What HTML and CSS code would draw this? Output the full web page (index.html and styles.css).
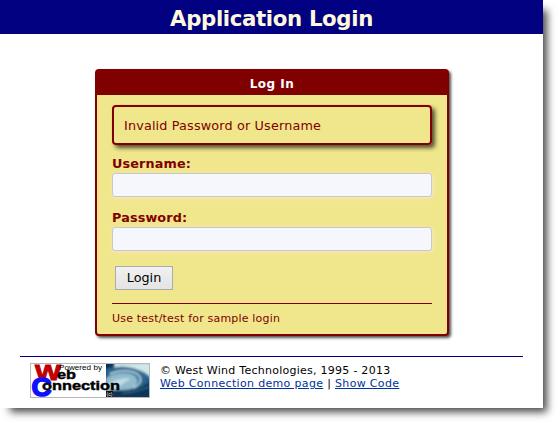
FILE: index.html
```html
<!DOCTYPE html>
<html lang="en">
<head>
<meta charset="utf-8">
<title>Application Login</title>
<link rel="stylesheet" href="styles.css">
</head>
<body>
<div class="window">
  <header class="banner"><h1>Application Login</h1></header>
  <main class="dialog">
    <h2 class="dialog-title">Log In</h2>
    <form class="dialog-body">
      <div class="error">Invalid Password or Username</div>
      <label for="user">Username:</label>
      <input class="field" id="user" type="text">
      <label for="pass">Password:</label>
      <input class="field" id="pass" type="password">
      <button class="login" type="button">Login</button>
      <div class="hint"><span>Use test/test for sample login</span></div>
    </form>
  </main>
  <footer class="footer">
    <svg class="logo" width="120" height="35" viewBox="0 0 120 35">
      <defs>
        <linearGradient id="sea" x1="0" y1="0" x2="1" y2="1">
          <stop offset="0" stop-color="#05264f"/>
          <stop offset=".5" stop-color="#397da8"/>
          <stop offset="1" stop-color="#0b3a68"/>
        </linearGradient>
        <filter id="soft"><feGaussianBlur stdDeviation=".9"/></filter>
        <clipPath id="photo"><rect x="76" y="1" width="43" height="33"/></clipPath>
      </defs>
      <rect x=".5" y=".5" width="119" height="34" fill="#fff" stroke="#b8b8b8"/>
      <g clip-path="url(#photo)">
        <rect x="76" y="1" width="43" height="33" fill="url(#sea)"/>
        <g filter="url(#soft)">
          <path d="M84 0H121V16C115 7 102 3 84 5Z" fill="#cfe6ea"/>
          <path d="M76 6C88 2 106 3 113 11C118 17 114 23 107 24C111 18 106 12 98 12C91 11 84 13 76 16Z" fill="#2b6690"/>
          <path d="M76 15C86 9 101 8 106 14C110 19 106 24 99 27L76 27Z" fill="#8fbccd"/>
          <path d="M80 11C91 6 106 7 110 14C112 19 108 23 103 25" fill="none" stroke="#c4dfe4" stroke-width="1.5"/>
          <path d="M76 22C86 16 94 14 101 16C96 18 90 23 84 27L76 29Z" fill="#c3dde3"/>
          <path d="M76 28C91 26 105 29 120 20V35H76Z" fill="#0c3459"/>
          <path d="M92 30C100 30 107 28 119 24" fill="none" stroke="#3f7ba1"/>
        </g>
        <rect x="76" y="28" width="7" height="6" fill="#111"/>
        <text class="logo-mark" x="76.5" y="33">(c)</text>
      </g>
      <text class="logo-w" x="5" y="17" textLength="26" lengthAdjust="spacingAndGlyphs">W</text>
      <text class="logo-c" x="1.5" y="32.5" textLength="20" lengthAdjust="spacingAndGlyphs">C</text>
      <text class="logo-small" x="29" y="7" textLength="43" lengthAdjust="spacingAndGlyphs">Powered by</text>
      <text class="logo-word" x="27" y="16" textLength="19" lengthAdjust="spacingAndGlyphs">eb</text>
      <text class="logo-word" x="12" y="26.5" textLength="78" lengthAdjust="spacingAndGlyphs">onnection</text>
    </svg>
    <div class="legal">
      <div class="copyright">© West Wind Technologies, 1995 - 2013</div>
      <div class="links"><a href="#">Web Connection demo page</a> | <a href="#">Show Code</a></div>
    </div>
  </footer>
</div>
</body>
</html>
```
FILE: styles.css
```css
* { box-sizing: border-box; }
body {
  min-height: 423px;
  margin: 0;
  background: #fff;
  font-family: Verdana, "DejaVu Sans", sans-serif;
}
.window {
  width: 543px;
  height: 408px;
  background: #fff;
  box-shadow: 7px 7px 8px -3px #000000b8;
}
.banner {
  height: 34px;
  background: #000080;
  color: #fff8dc;
  text-align: center;
}
.banner h1 {
  margin: 0;
  font-size: 21.3px;
  letter-spacing: -.37px;
  line-height: 37px;
}
.dialog {
  width: 354px;
  height: 267px;
  margin: 35px 0 0 95px;
  border: 2px solid #800000;
  border-radius: 4px;
  background: #f0e68c;
  color: #800000;
  box-shadow: 2px 2px 3px #000000b0;
}
.dialog-title {
  height: 24px;
  margin: 0;
  background: #800000;
  color: #fff;
  text-align: center;
  font-size: 12px;
  letter-spacing: .5px;
  line-height: 26px;
}
.dialog-body {
  display: flex;
  flex-direction: column;
  align-items: flex-start;
  padding: 10px 15px 0;
}
.error {
  width: 320px;
  height: 40px;
  margin-bottom: 9px;
  padding-left: 10px;
  border: 2px solid #800000;
  border-radius: 4px;
  box-shadow: 3px 3px 4px #000000a8;
  font-size: 12.8px;
  letter-spacing: .15px;
  line-height: 37px;
}
label {
  height: 19px;
  font-size: 12.8px;
  font-weight: bold;
  letter-spacing: .12px;
  line-height: 20px;
}
.field {
  width: 320px;
  height: 24px;
  margin: 0 0 11px;
  padding: 2px 5px;
  border: 1px solid #c8c8c8;
  border-radius: 3px;
  background: #f5f7fc;
  box-shadow: 1px 1px 4px #f5e8c8;
}
.login {
  width: 58px;
  height: 24px;
  margin: 4px 0 13px 3px;
  padding: 0;
  border: 1px solid #acacac;
  background: linear-gradient(#f0f0f0, #e4e4e4);
  color: #000;
  font: 12.8px/22px Verdana, "DejaVu Sans", sans-serif;
}
.hint {
  width: 320px;
  border-top: 1px solid #800000;
  padding-top: 7px;
  font-size: 11px;
  letter-spacing: .19px;
  line-height: 16px;
}
.footer {
  display: flex;
  gap: 10px;
  width: 503px;
  margin: 20px 0 0 20px;
  padding: 6px 0 0 10px;
  border-top: 1px solid #000080;
}
.logo { display: block; }
.legal {
  padding-top: 1px;
  font-size: 11px;
  line-height: 13px;
  letter-spacing: .26px;
  color: #000;
}
.links { letter-spacing: .33px; }
.legal a { color: #003399; }
.logo text { font-family: "Liberation Sans", Arial, sans-serif; }
.logo .logo-w { font-size: 22px; font-weight: bold; fill: #c00000; stroke: #c00000; }
.logo .logo-c { font-size: 25px; font-weight: bold; fill: #1010ff; stroke: #1010ff; stroke-width: 1.5px; }
.logo .logo-small { font-size: 7.5px; }
.logo .logo-word { font-size: 12px; font-weight: bold; stroke: #000; stroke-width: .4px; }
.logo .logo-mark { font-size: 5px; fill: #fff; }
```
